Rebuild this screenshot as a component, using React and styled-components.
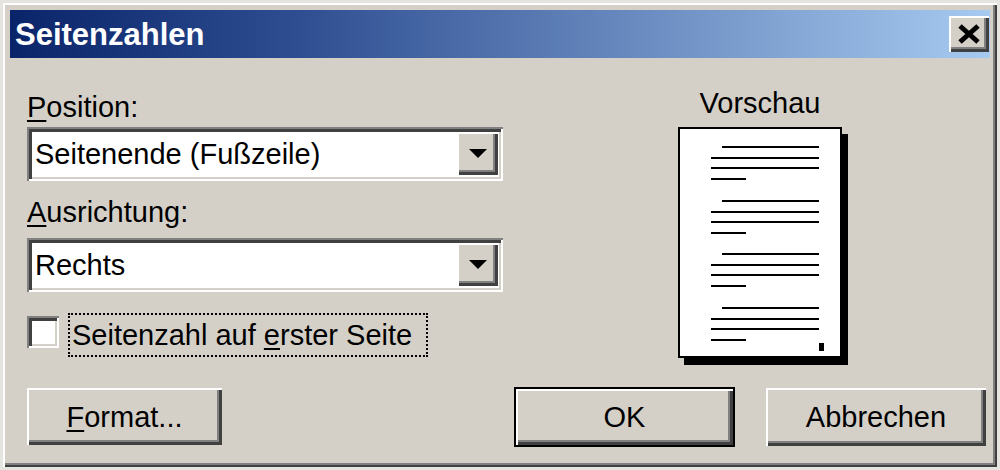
import React from "react";
import styled, { createGlobalStyle } from "styled-components";

const Global = createGlobalStyle`
  html, body { margin: 0; padding: 0; background: #e6e4de; }
  body { font-family: "Liberation Sans", Arial, sans-serif; }
  * { box-sizing: border-box; }
`;

const FACE = "#d4d0c8";

const raised = `
  box-shadow: inset 2px 2px 0 #ffffff, inset -3px -3px 0 #404040,
    inset -5px -5px 0 #808080;
`;

const sunken = `
  box-shadow: inset 2px 2px 0 #808080, inset -2px -2px 0 #ffffff,
    inset 5px 5px 0 #404040, inset -4px -4px 0 ${FACE};
`;

const Window = styled.div`
  margin: 3px 0 0 3px;
  width: 994px;
  height: 464px;
  padding: 7px;
  background: ${FACE};
  box-shadow: inset 2px 2px 0 #ffffff, inset -2px -2px 0 #404040,
    inset -4px -4px 0 #808080;
  display: flex;
  flex-direction: column;
`;

const TitleBar = styled.div`
  height: 48px;
  display: flex;
  align-items: center;
  padding: 2px 0 0 5px;
  background: linear-gradient(90deg, #0a246a 0%, #2f4f92 30%, #a6caf0 100%);
`;

const TitleText = styled.span`
  flex: 1;
  color: #ffffff;
  font-weight: bold;
  font-size: 31px;
  line-height: 36px;
`;

const CloseButton = styled.div`
  width: 40px;
  height: 36px;
  margin: -2px 1px 0 0;
  background: ${FACE};
  ${raised}
  display: flex;
  align-items: center;
  justify-content: center;
`;

const Body = styled.div`
  flex: 1;
  display: flex;
  flex-direction: column;
  padding: 32px 4px 0 17px;
`;

const TopSection = styled.div`
  display: flex;
  align-items: flex-start;
`;

const LeftCol = styled.div`
  width: 476px;
  display: flex;
  flex-direction: column;
`;

const Label = styled.div`
  font-size: 29px;
  line-height: 34px;
  color: #000;
  margin-top: ${(p) => p.$mt || 0}px;
`;

const Mn = styled.span`
  text-decoration: underline;
  text-decoration-thickness: 2px;
  text-underline-offset: 3px;
`;

const Combo = styled.div`
  height: 54px;
  margin-top: ${(p) => p.$mt || 0}px;
  background: #ffffff;
  ${sunken}
  display: flex;
  align-items: center;
  padding: 0 5px 1px 8px;
`;

const ComboText = styled.span`
  flex: 1;
  font-size: 29px;
  line-height: 34px;
  color: #000;
`;

const DropButton = styled.div`
  width: 41px;
  height: 43px;
  background: ${FACE};
  ${raised}
  display: flex;
  align-items: center;
  justify-content: center;
`;

const CheckRow = styled.div`
  margin-top: 21px;
  display: flex;
  align-items: flex-start;
  gap: 9px;
`;

const CheckBox = styled.div`
  width: 32px;
  height: 32px;
  margin-top: 3px;
  background: #ffffff;
  ${sunken}
`;

const FocusLabel = styled.div`
  border: 2px dotted #000;
  padding: 3px 14px 3px 2px;
  font-size: 29px;
  line-height: 34px;
  color: #000;
`;

const PreviewCol = styled.div`
  margin: -4px 0 0 175px;
  width: 170px;
  display: flex;
  flex-direction: column;
  align-items: flex-start;
`;

const PreviewLabel = styled.div`
  width: 164px;
  text-align: center;
  font-size: 29px;
  line-height: 34px;
  color: #000;
`;

const Page = styled.div`
  margin-top: 7px;
  width: 164px;
  height: 231px;
  border: 2px solid #000;
  background: #ffffff;
  box-shadow: 6px 7px 0 #000;
`;

const ButtonRow = styled.div`
  margin-top: 30px;
  display: flex;
  align-items: flex-start;
`;

const Button = styled.div`
  width: ${(p) => p.$w}px;
  height: ${(p) => p.$h || 57}px;
  margin-left: ${(p) => p.$ml || "0"};
  background: ${FACE};
  border: ${(p) => (p.$default ? "2px solid #000" : "none")};
  margin-top: ${(p) => (p.$default ? "-1px" : "0")};
  ${raised}
  display: flex;
  align-items: center;
  justify-content: center;
  font-size: 29px;
  line-height: 34px;
  color: #000;
`;

const lineGroups = [0, 54, 107, 161];

function PagePreview() {
  return (
    <svg width="160" height="227" viewBox="0 0 160 227">
      {lineGroups.map((g) => (
        <g key={g} fill="#000">
          <rect x="42" y={g + 17} width="97" height="2" />
          <rect x="31" y={g + 28} width="108" height="2" />
          <rect x="31" y={g + 38} width="108" height="2" />
          <rect x="31" y={g + 49} width="35" height="2" />
        </g>
      ))}
      <rect x="139" y="214" width="5" height="8" fill="#000" />
    </svg>
  );
}

function Arrow() {
  return (
    <svg width="18" height="10" viewBox="0 0 18 10">
      <polygon points="0,0 18,0 9,9" fill="#000" />
    </svg>
  );
}

export default function App() {
  return (
    <>
      <Global />
      <Window>
        <TitleBar>
          <TitleText>Seitenzahlen</TitleText>
          <CloseButton>
            <svg width="24" height="20" viewBox="0 0 24 20">
              <path d="M3 2 L21 18 M21 2 L3 18" stroke="#000" strokeWidth="5" />
            </svg>
          </CloseButton>
        </TitleBar>
        <Body>
          <TopSection>
            <LeftCol>
              <Label>
                <Mn>P</Mn>osition:
              </Label>
              <Combo $mt={3}>
                <ComboText>Seitenende (Fußzeile)</ComboText>
                <DropButton>
                  <Arrow />
                </DropButton>
              </Combo>
              <Label $mt={14}>
                <Mn>A</Mn>usrichtung:
              </Label>
              <Combo $mt={9}>
                <ComboText>Rechts</ComboText>
                <DropButton>
                  <Arrow />
                </DropButton>
              </Combo>
              <CheckRow>
                <CheckBox />
                <FocusLabel>
                  Seitenzahl auf <Mn>e</Mn>rster Seite
                </FocusLabel>
              </CheckRow>
            </LeftCol>
            <PreviewCol>
              <PreviewLabel>Vorschau</PreviewLabel>
              <Page>
                <PagePreview />
              </Page>
            </PreviewCol>
          </TopSection>
          <ButtonRow>
            <Button $w={195}>
              <span>
                <Mn>F</Mn>ormat...
              </span>
            </Button>
            <Button $w={221} $h={60} $ml="auto" $default>
              OK
            </Button>
            <Button $w={220} $h={58} $ml="31px">
              Abbrechen
            </Button>
          </ButtonRow>
        </Body>
      </Window>
    </>
  );
}
